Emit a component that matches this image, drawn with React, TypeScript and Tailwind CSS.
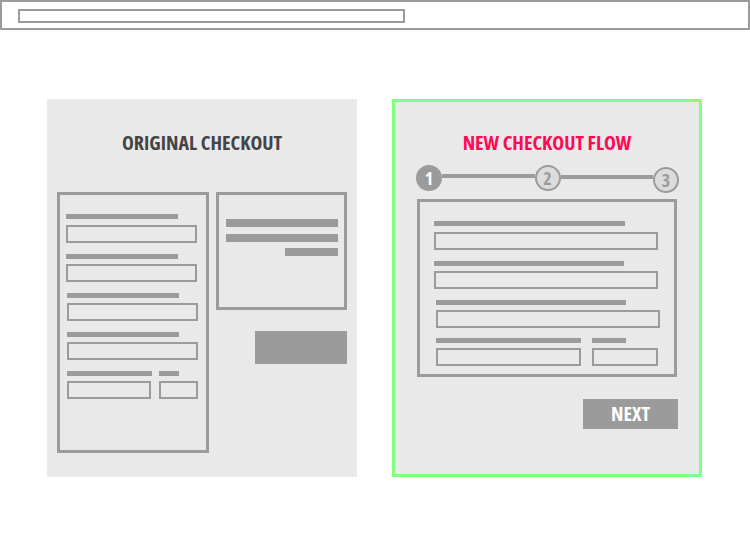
import React from 'react'

const heading = "font-['Open_Sans',sans-serif] font-bold font-stretch-condensed text-[20px] leading-[26px] text-center"

function Bar({ w, h = 'h-[5px]', cls = '' }: { w: string; h?: string; cls?: string }) {
  return <div className={`${w} ${h} bg-[#9b9b9b] ${cls}`} />
}

function Input({ w, cls = '' }: { w: string; cls?: string }) {
  return <div className={`${w} h-[18px] border-2 border-[#9b9b9b] ${cls}`} />
}

function Step({ n, active, cls = '' }: { n: number; active?: boolean; cls?: string }) {
  return (
    <div
      className={`w-[26px] h-[26px] shrink-0 rounded-full flex items-center justify-center text-[18px] font-bold font-stretch-condensed font-['Open_Sans',sans-serif] leading-none ${
        active ? 'bg-[#9b9b9b] text-white' : 'bg-[#dcdcdc] border-2 border-[#9b9b9b] text-[#9b9b9b]'
      } ${cls}`}
    >
      {n}
    </div>
  )
}

function OriginalCheckout() {
  return (
    <div className="w-[310px] h-[378px] bg-[#e9e9e9] pt-[31px]">
      <h2 className={`${heading} text-[#444444]`}>ORIGINAL CHECKOUT</h2>
      <div className="flex gap-[7px] px-[10px] mt-[36px]">
        {/* form */}
        <div className="w-[152px] h-[261px] border-[3px] border-[#9b9b9b] pl-[6px] pt-[19px]">
          <Bar w="w-[112px]" />
          <Input w="w-[131px]" cls="mt-[6px]" />
          <Bar w="w-[112px]" cls="mt-[11px]" />
          <Input w="w-[131px]" cls="mt-[5px]" />
          <Bar w="w-[112px]" cls="mt-[11px] ml-px" />
          <Input w="w-[131px]" cls="mt-[5px] ml-px" />
          <Bar w="w-[112px]" cls="mt-[11px] ml-px" />
          <Input w="w-[131px]" cls="mt-[5px] ml-px" />
          <div className="flex gap-[7px] mt-[11px] ml-px">
            <Bar w="w-[85px]" />
            <Bar w="w-[20px]" />
          </div>
          <div className="flex gap-[8px] mt-[5px] ml-px">
            <Input w="w-[84px]" />
            <Input w="w-[39px]" />
          </div>
        </div>
        {/* summary + button */}
        <div className="w-[131px] flex flex-col">
          <div className="h-[118px] border-[3px] border-[#9b9b9b] pl-[7px] pt-[24px] flex flex-col">
            <Bar w="w-[112px]" h="h-[8px]" />
            <Bar w="w-[112px]" h="h-[8px]" cls="mt-[7px]" />
            <Bar w="w-[53px]" h="h-[8px]" cls="mt-[6px] ml-[59px]" />
          </div>
          <div className="w-[92px] h-[33px] bg-[#9b9b9b] mt-[21px] self-end" />
        </div>
      </div>
    </div>
  )
}

function NewCheckout() {
  return (
    <div className="w-[310px] h-[378px] bg-[#e9e9e9] border-[3px] border-[#80ff80] pt-[28px] flex flex-col">
      <h2 className={`${heading} text-[#ff0a54]`}>NEW CHECKOUT FLOW</h2>
      <div className="flex items-start ml-[21px] mr-[20px] mt-[9px]">
        <Step n={1} active />
        <div className="flex-1 h-[4px] bg-[#9b9b9b] mt-[9px]" />
        <Step n={2} />
        <div className="flex-1 h-[4px] bg-[#9b9b9b] mt-[10px]" />
        <Step n={3} cls="mt-[2px]" />
      </div>
      <div className="mx-[22px] mt-[6px] h-[178px] border-[3px] border-[#9b9b9b] pl-[14px] pt-[19px]">
        <Bar w="w-[191px]" />
        <Input w="w-[224px]" cls="mt-[6px]" />
        <Bar w="w-[190px]" cls="mt-[11px]" />
        <Input w="w-[224px]" cls="mt-[5px]" />
        <Bar w="w-[190px]" cls="mt-[11px] ml-[2px]" />
        <Input w="w-[224px]" cls="mt-[5px] ml-[2px]" />
        <div className="flex gap-[11px] mt-[10px] ml-[2px]">
          <Bar w="w-[145px]" />
          <Bar w="w-[34px]" />
        </div>
        <div className="flex gap-[11px] mt-[5px] ml-[2px]">
          <Input w="w-[145px]" />
          <Input w="w-[66px]" />
        </div>
      </div>
      <div
        className={`self-end mr-[21px] mt-[22px] w-[95px] h-[30px] bg-[#9b9b9b] flex items-center justify-center ${heading} text-white`}
      >
        NEXT
      </div>
    </div>
  )
}

export default function App() {
  return (
    <div className="w-[750px] h-[550px] bg-white">
      <div className="h-[30px] border-2 border-[#9b9b9b] pl-[16px] pt-[7px]">
        <div className="w-[387px] h-[14px] border-2 border-[#9b9b9b]" />
      </div>
      <div className="flex gap-[35px] mt-[69px] pl-[47px]">
        <OriginalCheckout />
        <NewCheckout />
      </div>
    </div>
  )
}
